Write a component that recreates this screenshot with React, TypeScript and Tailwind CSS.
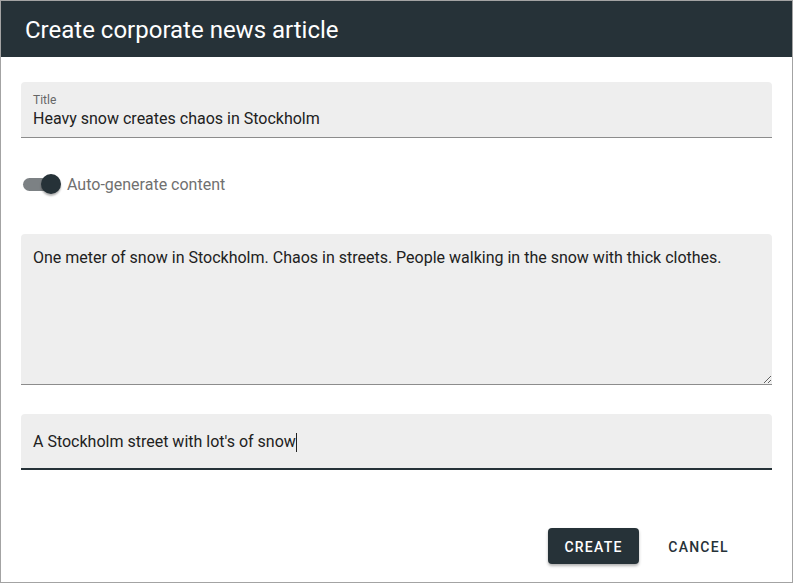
import React from "react";

export default function App() {
  return (
    <div
      className="w-[793px] h-[583px] border border-[#a3a3a3] bg-white flex flex-col"
      style={{ fontFamily: "Roboto, 'Noto Sans', sans-serif" }}
    >
      <div className="h-14 bg-[#263238] flex items-center pl-6 shrink-0">
        <h1 className="text-white text-[24px] leading-none mt-[2px]">Create corporate news article</h1>
      </div>
      <div className="flex flex-col px-5 pt-[25px]">
        <div className="h-14 bg-[#eeeeee] rounded-t border-b border-[#8c8c8c] px-3 flex flex-col justify-center">
          <div className="text-[12px] leading-[14px] text-[#666666] mt-[3px]">Title</div>
          <div className="text-[16px] leading-[20px] text-[#212121] mt-[2px]">Heavy snow creates chaos in Stockholm</div>
        </div>
        <div className="mt-[22px] h-12 flex items-center">
          <div className="relative w-[38px] h-[20px] ml-[2px] flex items-center">
            <div className="w-[36px] h-[13px] rounded-full bg-[#7c8184]" />
            <div className="absolute left-[18px] top-0 w-[20px] h-[20px] rounded-full bg-[#263238] shadow-[0_2px_2px_rgba(0,0,0,0.3)]" />
          </div>
          <span className="ml-[6px] text-[16px] text-[#707070] mt-[1px]">Auto-generate content</span>
        </div>
        <textarea
          readOnly
          defaultValue="One meter of snow in Stockholm. Chaos in streets. People walking in the snow with thick clothes."
          className="mt-[26px] h-[151px] w-full bg-[#eeeeee] rounded-t border-b border-[#8c8c8c] px-3 pt-[12px] text-[16px] leading-[24px] text-[#212121] outline-none resize"
          style={{ fontFamily: "Roboto, 'Noto Sans', sans-serif" }}
        />
        <div className="mt-[29px] h-14 bg-[#eeeeee] rounded-t border-b-2 border-[#263238] px-3 flex items-center pt-[2px]">
          <span className="text-[16px] text-[#212121] leading-[20px]">A Stockholm street with lot's of snow</span>
          <span className="inline-block w-px h-[19px] bg-[#212121]" />
        </div>
        <div className="mt-[58px] flex justify-end pr-[28px]">
          <button className="w-[91px] h-9 pt-[2px] rounded bg-[#263238] text-white text-[14px] font-medium tracking-[1.25px] shadow-[0_2px_3px_rgba(0,0,0,0.3)]">
            CREATE
          </button>
          <button className="ml-[14px] w-[91px] h-9 pt-[2px] rounded text-[#263238] text-[14px] font-medium tracking-[1.25px]">
            CANCEL
          </button>
        </div>
      </div>
    </div>
  );
}
